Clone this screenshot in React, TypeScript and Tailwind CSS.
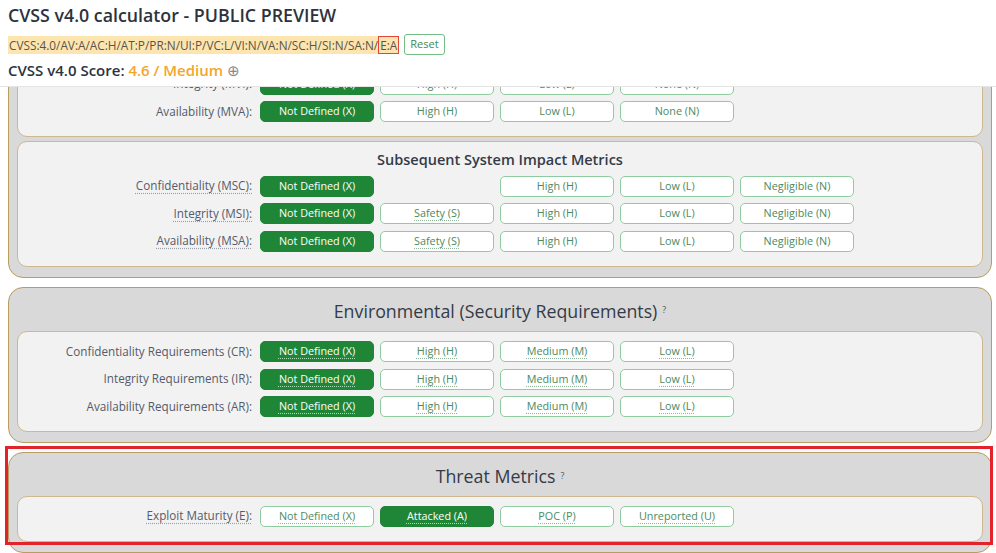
import React from "react";

type Opt = { label: string; on?: boolean; dot?: boolean; empty?: boolean };

const Btn = ({ label, on, dot, empty }: Opt) => {
  if (empty) return <span className="w-[114px] h-[21px] shrink-0" />;
  return (
    <button
      className={
        on
          ? "w-[114px] h-[21px] shrink-0 rounded-[5px] border border-[#208637] bg-[#208637] text-[10.8px] leading-none text-white"
          : "w-[114px] h-[21px] shrink-0 rounded-[5px] border border-[#8fcba0] bg-white text-[10.8px] leading-none text-[#4c8a5f]"
      }
    >
      <span
        className={
          dot
            ? on
              ? "underline decoration-dotted decoration-[#a7d9b3] underline-offset-[3px]"
              : "underline decoration-dotted decoration-[#8fb59a] underline-offset-[3px]"
            : ""
        }
      >
        {label}
      </span>
    </button>
  );
};

const Row = ({ label, dot, opts }: { label: string; dot?: boolean; opts: Opt[] }) => (
  <div className="flex items-center h-[21px]">
    <div className="w-[234px] shrink-0 text-right text-[11.7px] text-[#555b6a]">
      <span className={dot ? "underline decoration-dotted decoration-[#9aa0aa] underline-offset-[3px]" : ""}>
        {label}
      </span>
    </div>
    <div className="flex gap-[6px] ml-[8px]">
      {opts.map((o, i) => (
        <Btn key={i} {...o} />
      ))}
    </div>
  </div>
);

const Inner = ({ title, top = "pt-[8px]", children }: { title?: string; top?: string; children: React.ReactNode }) => (
  <div className={`rounded-[10px] border border-[#cdb890] bg-[#f2f2f2] pb-[14px] ${top}`}>
    {title && (
      <h3 className="text-center text-[14.5px] font-semibold leading-[20px] mb-[5.5px] text-[#343b48]">{title}</h3>
    )}
    <div className="flex flex-col gap-[6.5px]">{children}</div>
  </div>
);

const Outer = ({ title, children }: { title?: string; children: React.ReactNode }) => (
  <section className="rounded-[15px] border border-[#b89c62] bg-[#d9d9d9] px-[8px] pt-[11px] pb-[10px]">
    {title && (
      <h2 className="text-center text-[17.8px] font-medium leading-[24px] mb-[8px] text-[#343b48]">
        {title}
        <sup className="ml-[5px] text-[9px] text-[#555]">?</sup>
      </h2>
    )}
    <div className="flex flex-col gap-[4px]">{children}</div>
  </section>
);

const App = () => {
  return (
    <div className="h-[553px] overflow-hidden bg-white font-['Open_Sans',sans-serif] text-[#2c333d]">
      <header className="relative z-10 h-[87px] border-b border-[#e4e4e4] bg-white pl-[8px] pt-[2px]">
        <h1 className="text-[17.8px] font-semibold leading-[26px]">CVSS v4.0 calculator - PUBLIC PREVIEW</h1>
        <div className="flex items-center mt-[6px] gap-[5px]">
          <span className="bg-[#fde5b0] text-[11.8px] leading-[18px] text-[#5a5448] pl-[1px]">
            CVSS:4.0/AV:A/AC:H/AT:P/PR:N/UI:P/VC:L/VI:N/VA:N/SC:H/SI:N/SA:N/
            <span className="border border-[#e0463c] px-[1px]">E:A</span>
          </span>
          <button className="h-[21px] px-[5px] rounded-[3px] border border-[#74bd84] bg-white text-[11px] text-[#3f8a53]">
            Reset
          </button>
        </div>
        <div className="mt-[5px] text-[15px] font-semibold leading-[20px]">
          CVSS v4.0 Score: <span className="text-[#f2a62a]">4.6 / Medium</span>{" "}
          <span className="font-normal text-[#8a8a8a]">⊕</span>
        </div>
      </header>

      <main className="h-[466px] overflow-hidden pl-[8px] pr-[4px]">
        <div className="-mt-[119.5px] flex flex-col gap-[9px]">
          <Outer title="Environmental (Modified Base Metrics)">
            <Inner title="Vulnerable System Impact Metrics">
              <Row
                label="Confidentiality (MVC):"
                opts={[{ label: "Not Defined (X)", on: true }, { label: "High (H)" }, { label: "Low (L)" }, { label: "None (N)" }]}
              />
              <Row
                label="Integrity (MVI):"
                opts={[{ label: "Not Defined (X)", on: true }, { label: "High (H)" }, { label: "Low (L)" }, { label: "None (N)" }]}
              />
              <Row
                label="Availability (MVA):"
                opts={[{ label: "Not Defined (X)", on: true }, { label: "High (H)" }, { label: "Low (L)" }, { label: "None (N)" }]}
              />
            </Inner>
            <Inner title="Subsequent System Impact Metrics">
              <Row
                label="Confidentiality (MSC):"
                dot
                opts={[
                  { label: "Not Defined (X)", on: true },
                  { label: "", empty: true },
                  { label: "High (H)" },
                  { label: "Low (L)" },
                  { label: "Negligible (N)" },
                ]}
              />
              <Row
                label="Integrity (MSI):"
                dot
                opts={[
                  { label: "Not Defined (X)", on: true },
                  { label: "Safety (S)", dot: true },
                  { label: "High (H)" },
                  { label: "Low (L)" },
                  { label: "Negligible (N)" },
                ]}
              />
              <Row
                label="Availability (MSA):"
                dot
                opts={[
                  { label: "Not Defined (X)", on: true },
                  { label: "Safety (S)", dot: true },
                  { label: "High (H)" },
                  { label: "Low (L)" },
                  { label: "Negligible (N)" },
                ]}
              />
            </Inner>
          </Outer>

          <Outer title="Environmental (Security Requirements)">
            <Inner top="pt-[9.5px]">
              <Row
                label="Confidentiality Requirements (CR):"
                opts={[
                  { label: "Not Defined (X)", on: true, dot: true },
                  { label: "High (H)", dot: true },
                  { label: "Medium (M)", dot: true },
                  { label: "Low (L)", dot: true },
                ]}
              />
              <Row
                label="Integrity Requirements (IR):"
                opts={[
                  { label: "Not Defined (X)", on: true, dot: true },
                  { label: "High (H)", dot: true },
                  { label: "Medium (M)", dot: true },
                  { label: "Low (L)", dot: true },
                ]}
              />
              <Row
                label="Availability Requirements (AR):"
                opts={[
                  { label: "Not Defined (X)", on: true, dot: true },
                  { label: "High (H)", dot: true },
                  { label: "Medium (M)", dot: true },
                  { label: "Low (L)", dot: true },
                ]}
              />
            </Inner>
          </Outer>

          <div className="relative">
            <Outer title="Threat Metrics">
              <Inner top="pt-[8.5px]">
                <Row
                  label="Exploit Maturity (E):"
                  dot
                  opts={[
                    { label: "Not Defined (X)", dot: true },
                    { label: "Attacked (A)", on: true, dot: true },
                    { label: "POC (P)", dot: true },
                    { label: "Unreported (U)", dot: true },
                  ]}
                />
              </Inner>
            </Outer>
            <div className="pointer-events-none absolute -left-[3px] -right-[1px] -top-[6px] h-[99px] border-[3px] border-[#e3232c]" />
          </div>
        </div>
      </main>
    </div>
  );
};

export default App;
